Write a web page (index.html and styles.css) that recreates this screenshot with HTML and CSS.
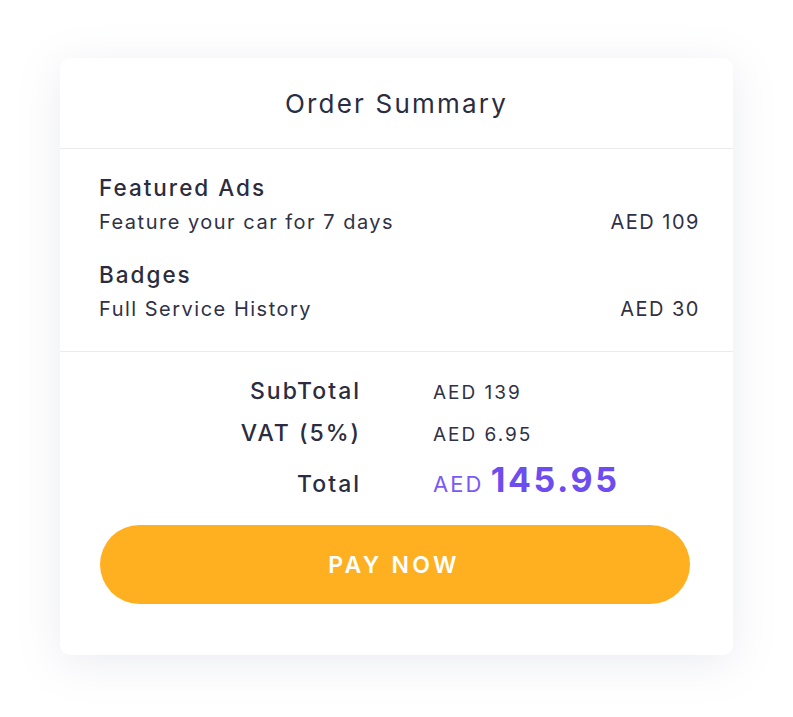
FILE: index.html
```html
<!DOCTYPE html>
<html>
<head>
<meta charset="utf-8">
<link rel="stylesheet" href="styles.css">
</head>
<body>
<div class="page">
  <div class="card">
    <div class="card-header">Order Summary</div>
    <div class="items">
      <div class="item">
        <div class="item-title">Featured Ads</div>
        <div class="item-row"><span>Feature your car for 7 days</span><span>AED 109</span></div>
      </div>
      <div class="item">
        <div class="item-title">Badges</div>
        <div class="item-row"><span>Full Service History</span><span>AED 30</span></div>
      </div>
    </div>
    <div class="totals">
      <div class="label">SubTotal</div><div class="value">AED 139</div>
      <div class="label">VAT (5%)</div><div class="value">AED 6.95</div>
      <div class="label total-label">Total</div><div class="value total-value"><span class="cur">AED</span> <span class="amount">145.95</span></div>
    </div>
    <div class="actions">
      <button class="pay">PAY NOW</button>
    </div>
  </div>
</div>
</body>
</html>
```
FILE: styles.css
```css
html, body {
  margin: 0;
  padding: 0;
  background: #ffffff;
}
body {
  font-family: Inter, "Open Sans", sans-serif;
  color: #2b2c40;
}
.page {
  padding: 58px 60px 62px 60px;
}
.card {
  background: #ffffff;
  border-radius: 10px;
  box-shadow: 0 8px 44px rgba(120, 130, 170, 0.15);
  height: 597px;
  box-sizing: border-box;
}
.card-header {
  height: 90px;
  display: flex;
  align-items: center;
  justify-content: center;
  font-size: 26px;
  font-weight: 400;
  letter-spacing: 2.2px;
  border-bottom: 1px solid #ebebef;
}
.items {
  padding: 24px 33px 26px 39px;
  border-bottom: 1px solid #ebebef;
  display: flex;
  flex-direction: column;
  gap: 22px;
}
.item-title {
  font-size: 22.5px;
  font-weight: 500;
  line-height: 30px;
  letter-spacing: 2px;
}
.item-row {
  margin-top: 4px;
  display: flex;
  justify-content: space-between;
  font-size: 20px;
  line-height: 31px;
  letter-spacing: 1.5px;
  color: #303145;
}
.totals {
  display: grid;
  grid-template-columns: 262px 1fr;
  column-gap: 72px;
  padding: 19px 0 0 39px;
  align-items: baseline;
}
.label {
  text-align: right;
  font-size: 23px;
  font-weight: 500;
  line-height: 41px;
  letter-spacing: 2px;
}
.value {
  font-size: 19px;
  line-height: 41px;
  letter-spacing: 2px;
  color: #303145;
}
.total-label {
  line-height: 49px;
}
.total-value {
  line-height: 49px;
}
.total-value .cur {
  color: #7a5af5;
  font-size: 22px;
  letter-spacing: 2px;
}
.total-value .amount {
  color: #6d4cf0;
  font-size: 34px;
  font-weight: 700;
  letter-spacing: 2.6px;
}
.actions {
  padding: 15px 43px 0 40px;
}
.pay {
  display: block;
  width: 100%;
  height: 79px;
  border: none;
  border-radius: 40px;
  background: #ffb020;
  color: #ffffff;
  font-family: Inter, "Open Sans", sans-serif;
  font-size: 23px;
  font-weight: 600;
  letter-spacing: 3.3px;
  padding-left: 4px;
}
```
